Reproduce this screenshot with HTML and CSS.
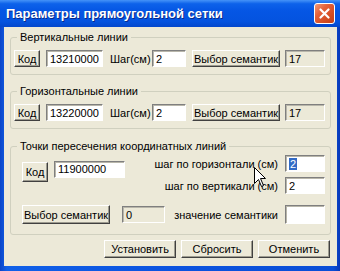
FILE: index.html
```html
<!DOCTYPE html>
<html lang="ru">
<head>
    <meta charset="UTF-8">
    <title>Параметры прямоугольной сетки</title>
    <link rel="stylesheet" href="styles.css">
</head>
<body>
    <div class="window">
        <div class="titlebar">
            <span class="title">Параметры прямоугольной сетки</span>
            <button class="close">
                <svg width="11" height="11" viewBox="0 0 11 11"><path d="M1.5 1.5 L9.5 9.5 M9.5 1.5 L1.5 9.5" stroke="#fff" stroke-width="2.2" stroke-linecap="round"/></svg>
            </button>
        </div>
        <div class="client">
            <fieldset class="group">
                <legend>Вертикальные линии</legend>
                <div class="row">
                    <button class="btn code-btn">Код</button>
                    <span class="edit code-edit">13210000</span>
                    <span class="step-lbl">Шаг(см)</span>
                    <span class="edit step-edit">2</span>
                    <button class="btn sem-btn">Выбор семантик</button>
                    <span class="edit readonly val-edit">17</span>
                </div>
            </fieldset>

            <fieldset class="group group-2">
                <legend>Горизонтальные линии</legend>
                <div class="row">
                    <button class="btn code-btn">Код</button>
                    <span class="edit code-edit">13220000</span>
                    <span class="step-lbl">Шаг(см)</span>
                    <span class="edit step-edit">2</span>
                    <button class="btn sem-btn">Выбор семантик</button>
                    <span class="edit readonly val-edit">17</span>
                </div>
            </fieldset>

            <fieldset class="group group-3">
                <legend>Точки пересечения координатных линий</legend>
                <div class="cross-top">
                    <div class="cross-code">
                        <button class="btn code-btn tall">Код</button>
                        <span class="edit cross-edit">11900000</span>
                    </div>
                    <div class="steps">
                        <span class="steps-lbl">шаг по горизонтали (см)</span>
                        <span class="edit num-edit"><span class="sel">2</span></span>
                        <span class="steps-lbl">шаг по вертикали (см)</span>
                        <span class="edit num-edit">2</span>
                    </div>
                </div>
                <div class="row cross-bottom">
                    <button class="btn sem-btn tall">Выбор семантик</button>
                    <span class="edit readonly zero-edit">0</span>
                    <span class="sem-lbl">значение семантики</span>
                    <span class="edit num-edit tall"></span>
                </div>
            </fieldset>

            <div class="actions">
                <button class="btn act-btn">Установить</button>
                <button class="btn act-btn">Сбросить</button>
                <button class="btn act-btn">Отменить</button>
            </div>
        </div>

        <svg class="cursor" width="13" height="21" viewBox="0 0 13 21">
            <path d="M0.5 0.5 L0.5 16.5 L4.5 12.5 L7.5 19.5 L9.5 18.5 L6.5 11.5 L11.5 11.5 Z" fill="#fff" stroke="#000" stroke-width="1"/>
        </svg>
    </div>
</body>
</html>
```

FILE: styles.css
```css
* {
    box-sizing: border-box;
}
body {
    margin: 0;
    font-family: "Liberation Sans", Arial, sans-serif;
    font-size: 11px;
    color: #000;
}
.window {
    position: relative;
    width: 340px;
    height: 271px;
    display: flex;
    flex-direction: column;
    background: linear-gradient(to right, #0a44c8, #1060e8 2%, #0b53df 50%, #0a4ed6 98%, #0838b8);
}
.titlebar {
    height: 27px;
    flex: none;
    display: flex;
    align-items: center;
    justify-content: space-between;
    padding: 0 5px 1px 6px;
    background: linear-gradient(to bottom, #4593f8 0%, #0d62ea 14%, #0556e4 40%, #0453df 80%, #0347cc 100%);
}
.title {
    color: #fff;
    font-weight: bold;
    font-size: 13px;
    text-shadow: 1px 1px 0 #0b2a8a;
}
.close {
    width: 21px;
    height: 21px;
    padding: 0;
    display: flex;
    align-items: center;
    justify-content: center;
    border: 1px solid #fff;
    border-radius: 3px;
    background: linear-gradient(135deg, #f39a78 0%, #e4613a 35%, #d24a1f 75%, #c0401a 100%);
}
.client {
    flex: 1;
    margin: 0 3px 5px 4px;
    padding: 4px 6px 0;
    background: #ece9d8;
}
.group {
    margin: 0;
    padding: 6px 5px 7px 3px;
    border: 1px solid #d0d0bf;
    border-radius: 3px;
}
.group legend {
    margin-left: 3px;
    padding: 0 3px;
    line-height: 13px;
}
.group-2 {
    margin-top: 10px;
}
.group-3 {
    margin-top: 11px;
    padding-bottom: 10px;
}
.row {
    display: flex;
    align-items: center;
}
.btn {
    height: 17px;
    padding: 0;
    font: inherit;
    color: #000;
    background: #ece9d8;
    border: 1px solid;
    border-color: #fff #404040 #404040 #fff;
    box-shadow: inset -1px -1px 0 #9d9b8f;
}
.edit {
    height: 17px;
    padding: 0 3px;
    display: flex;
    align-items: center;
    background: #fff;
    border: 1px solid;
    border-color: #7f7f7f #fff #fff #7f7f7f;
    box-shadow: inset 1px 1px 0 #b8b6aa;
}
.edit.readonly {
    background: #ece9d8;
}
.tall {
    height: 19px;
}
.code-btn {
    width: 26px;
}
.code-edit {
    width: 57px;
    margin-left: 6px;
}
.step-lbl {
    width: 42px;
    margin-left: 7px;
}
.step-edit {
    width: 34px;
}
.sem-btn {
    width: 88px;
    margin-left: 6px;
}
.val-edit {
    width: 40px;
    margin-left: 5px;
}
.cross-top {
    display: flex;
    align-items: flex-start;
    margin-top: -4px;
    padding-left: 8px;
}
.cross-code {
    display: flex;
    align-items: flex-start;
}
.cross-code .code-btn {
    height: 20px;
    margin-top: 7px;
}
.cross-edit {
    width: 71px;
    margin-left: 6px;
    margin-top: 6px;
    align-items: flex-start;
    padding-top: 1px;
}
.steps {
    margin-left: auto;
    display: grid;
    grid-template-columns: auto 40px;
    column-gap: 7px;
    row-gap: 5px;
    align-items: center;
}
.steps-lbl {
    text-align: right;
}
.num-edit {
    width: 40px;
}
.sel {
    background: #316ac5;
    color: #fff;
    padding: 0 1px;
}
.cross-bottom {
    margin-top: 11px;
    padding-left: 8px;
}
.cross-bottom .sem-btn {
    margin-left: 0;
}
.zero-edit {
    width: 43px;
    margin-left: 12px;
}
.sem-lbl {
    flex: 1;
    text-align: right;
    margin-right: 7px;
}
.actions {
    display: flex;
    justify-content: flex-end;
    gap: 5px;
    margin-top: 5px;
    padding-right: 1px;
}
.act-btn {
    width: 72px;
    height: 18px;
}
.cursor {
    position: absolute;
    left: 254px;
    top: 167px;
}
```
